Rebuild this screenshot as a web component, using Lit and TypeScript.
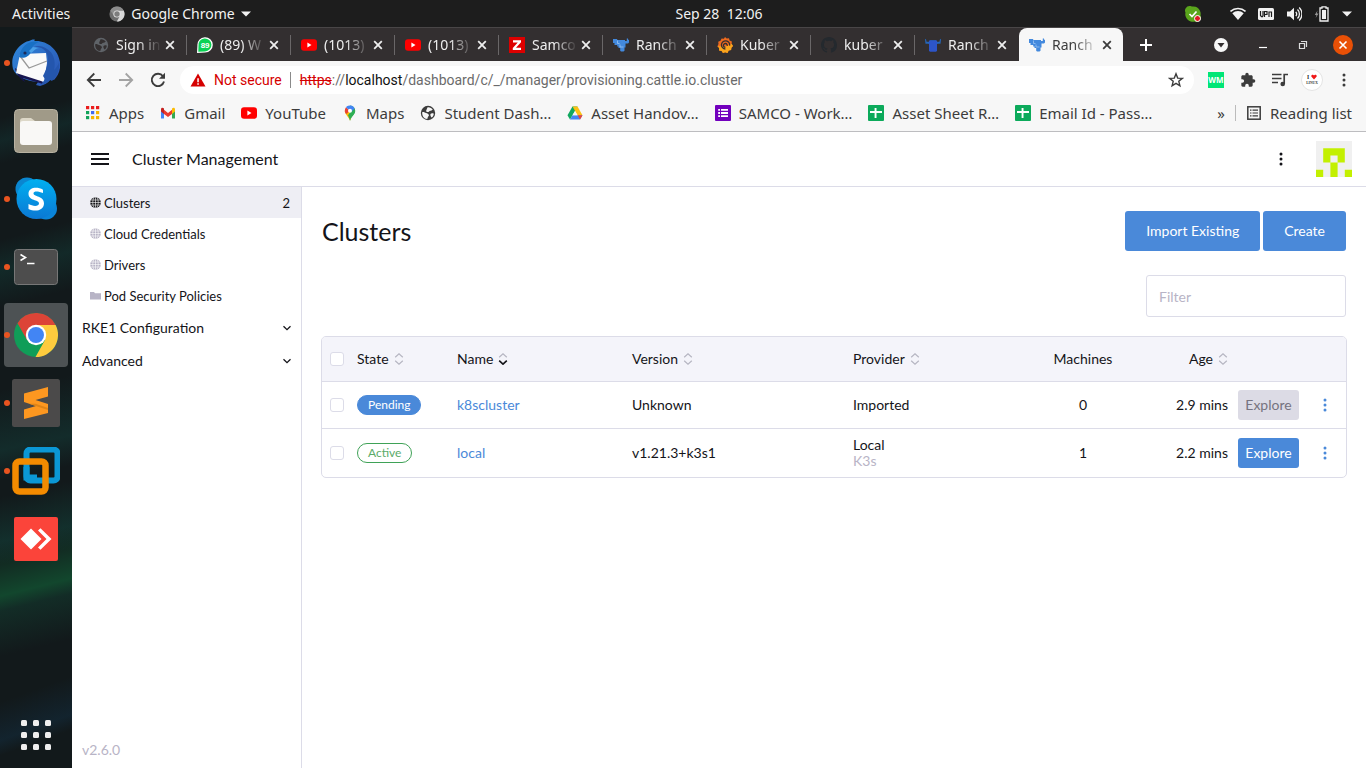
import { LitElement, html, css, svg, type TemplateResult } from "lit";
import { customElement, state } from "lit/decorators.js";
import { classMap } from "lit/directives/class-map.js";

const icon = (size: number, box: string, body: unknown) =>
  html`<svg width=${size} height=${size} viewBox=${box} aria-hidden="true">${body}</svg>`;

/* ---------- site icons ---------- */
const globe = (fill: string) => icon(16, "0 0 16 16", svg`
  <circle cx="8" cy="8" r="7.200" fill=${fill}></circle>
  <path d="M2.200 7.200C4 6.800 5 7.800 6 8.100c1.400.1 1.800 1 2.500 1.500.9.300.5 1.300-.2 1.800-.7.500-.6 1.700-1.100 2.700C4 13.600 1.900 11 2.200 7.200z" fill="var(--hole)"></path>
  <path d="M7.600 2.200c1.900-.3 4.200.7 5.200 2.500-1 .3-1.600 1.100-2.700 1.100-.9.300-1.300 1.500-2.400 1.300-1.200-.2-1.900-.9-1.400-1.900.5-.8.700-1.900 1.300-3z" fill="var(--hole)"></path>
  <path d="M10.500 8.900c.8-.9 2.400-.8 3.300-.2-.2 1.700-1 3-2.200 3.900-.5-1-1.700-2.300-1.100-3.700z" fill="var(--hole)"></path>`);
const whatsapp = icon(16, "0 0 16 16", svg`
  <path d="M0 16l.4-7.500A7.700 7.700 0 1 1 8 15.600z" fill="#fff"></path>
  <path d="M1.300 14.800l.2-6A6.500 6.500 0 1 1 8 14.400z" fill="#0bd254"></path>
  <text x="8.100" y="10.600" font-size="8" font-weight="700" text-anchor="middle" fill="#fff" font-family="Liberation Sans, sans-serif">89</text>`);
const youtube = icon(16, "0 0 16 16", svg`
  <rect x="0" y="2.300" width="16" height="11.400" rx="3" fill="#f00"></rect><path d="M6.400 5.600v4.800L10.500 8z" fill="#fff"></path>`);
const zerodha = icon(16, "0 0 16 16", svg`
  <rect width="16" height="16" fill="#d00"></rect><path d="M4 3.200h8v2L7 10.800h5v2.200H3.800v-2.100l5-5.500H4z" fill="#fff"></path>`);
const rancher = icon(16, "0 0 16 16", svg`
  <path d="M0 2h4.200v1H12v1h1.800V1.500H15v1.300h1v2.700l-1 1h-2.500v4h-1v3.200l-1 .8H8l-.8-.8V11H5.500V9.500H4.200V8H1.500V6H0z" fill="#4389dd"></path>
  <path d="M4.500 3.500v3h2M7 7.500V10h3.500" stroke="#9cc4f2" stroke-width=".8" fill="none"></path>`);
const cattle = icon(16, "0 0 16 16", svg`
  <path d="M0 2.500l.9-.7.7 3h3l.4-1.500h6l.4 1.500h3l.7-3 .9.700-.5 4.300h-3V7H3.500v-.2h-3z" fill="#2566b8"></path>
  <path d="M4 3.500h8v10l-.8 1.200H4.800L4 13.500z" fill="#2d55c8"></path>`);
const grafana = icon(16, "0 0 16 16", svg`
  <path d="M8 0l1.700 1.500 2.300-.3.600 2.200 2.300 1-.3 2.400L16 9l-1.600 1.700-.3 2.400-2.400.4L10.500 16l-2.300-.8-2.200.8-1.400-2-2.500-.5.1-2.500L.4 9.200l1.100-2.100L1.200 4.700l2.300-.9L4.600 1.600l2.300.1z" fill="#ee6a1e"></path>
  <path d="M.4 9.200L9 9.500l5.600-2.700L16 9l-1.600 1.700-.3 2.400-2.400.4L10.500 16l-2.300-.8-2.200.8-1.400-2-2.500-.5.1-2.500z" fill="#f9a51c"></path>
  <path d="M12.600 8.600A4.100 4.100 0 1 0 8.400 12M10.200 8.800a1.900 1.900 0 1 0-1.800 1.500" fill="none" stroke="#332e2f" stroke-width="1.300"></path>`);
const github = icon(16, "0 0 16 16", svg`
  <path d="M8 0C3.580 0 0 3.580 0 8c0 3.540 2.290 6.530 5.470 7.590.4.070.550-.17.550-.38 0-.19-.01-.82-.01-1.490-2.010.370-2.530-.49-2.690-.94-.09-.23-.48-.94-.82-1.130-.28-.15-.68-.52-.01-.53.630-.01 1.080.580 1.230.820.720 1.210 1.870.870 2.330.660.070-.52.280-.87.510-1.070-1.780-.2-3.640-.89-3.640-3.950 0-.87.310-1.590.820-2.150-.08-.2-.36-1.020.080-2.120 0 0 .670-.21 2.200.820A7.700 7.700 0 0 1 8 3.860c.680 0 1.360.09 2 .270 1.530-1.040 2.200-.82 2.200-.82.440 1.100.160 1.920.080 2.120.510.560.820 1.270.820 2.150 0 3.070-1.870 3.750-3.650 3.950.290.250.540.730.540 1.480 0 1.070-.01 1.930-.01 2.200 0 .210.150.460.550.380A8 8 0 0 0 16 8c0-4.420-3.580-8-8-8z" fill="#24292e"></path>`);
const apps = icon(16, "0 0 16 16", svg`
  ${["#ea1d1d", "#ea1d1d", "#ea1d1d", "#12a35a", "#4169f0", "#f5b400", "#12a35a", "#f5b400", "#f5b400"].map(
    (c, i) => svg`<rect x=${1 + (i % 3) * 5} y=${1 + Math.floor(i / 3) * 5} width="3.200" height="3.200" fill=${c}></rect>`)}`);
const gmail = icon(16, "0 0 16 16", svg`
  <path d="M1 4v9.500h3V8z" fill="#4285f4"></path><path d="M15 4v9.500h-3V8z" fill="#34a853"></path>
  <path d="M4 4.800L8 8l4-3.200V9l-4 3.100L4 9z" fill="#ea3a2e"></path>
  <path d="M1 4.200C1 2.700 2.700 2.200 4 3.500V9L1 6.600z" fill="#c5221f"></path><path d="M15 4.200c0-1.500-1.700-2-3-.7V9l3-2.400z" fill="#fbbc04"></path>`);
const maps = icon(16, "0 0 16 16", svg`
  <path d="M8 .5a5.200 5.200 0 0 1 5.200 5.200C13.200 9.500 9.500 11 8 15.800z" fill="#34a853"></path>
  <path d="M8 15.800C7 12 2.800 9.500 2.800 5.700L8 5.500l2 4z" fill="#fbbc04"></path>
  <path d="M8 15.800c.4-4.500 5.200-6.300 5.200-10.100L10 5 6 10.200c1 1.800 1.500 3.600 2 5.600z" fill="#2eaf54"></path>
  <path d="M2.800 5.700A5.200 5.200 0 0 1 4 2.200L8 5.700 4.300 9C3.400 8 2.800 7 2.800 5.700z" fill="#ea4335"></path>
  <path d="M4 2.200A5.200 5.200 0 0 1 12.700 3.500L9 7z" fill="#4285f4"></path>
  <circle cx="8" cy="5.700" r="2" fill="#fff"></circle>`);
const drive = icon(16, "0 0 16 16", svg`
  <path d="M5.500 1.500h5L8 6 3 14.500.5 10.200z" fill="#11a860"></path>
  <path d="M5.500 1.500h5l5 8.700h-5z" fill="#fbc116"></path>
  <path d="M5.500 10.200h10L13 14.500H3z" fill="#4285f4"></path><path d="M8 6l2.500 4.200h-5z" fill="#f7f7f7"></path>
  <path d="M10.700 10.200h4.800L13 14.500z" fill="#ea4335"></path>`);
const forms = icon(16, "0 0 16 16", svg`
  <rect width="16" height="16" rx="1" fill="#7200bd"></rect>
  <path d="M3.200 4h1.800v1.800H3.200zM3.200 7.100h1.800v1.800H3.200zM3.200 10.200h1.800V12H3.200zM6 4h7v1.800H6zM6 7.100h7v1.800H6zM6 10.200h7V12H6z" fill="#fff"></path>`);
const sheets = icon(16, "0 0 16 16", svg`
  <rect width="16" height="16" rx="1" fill="#0caa5b"></rect><path d="M6.600 3h1.900v3H14v1.900H8.500V13H6.600V7.900H2V6h4.600z" fill="#fff"></path>`);

/* ---------- browser glyphs ---------- */
const cross = icon(10, "0 0 10 10", svg`<path d="M1.200 1.200l7.600 7.600M8.800 1.200L1.200 8.800" stroke="currentColor" stroke-width="1.800"></path>`);
const back = icon(16, "0 0 16 16", svg`<path d="M15 8H2M8.300 1.500L1.800 8l6.500 6.500" fill="none" stroke="currentColor" stroke-width="1.800"></path>`);
const forward = icon(16, "0 0 16 16", svg`<path d="M1 8h13M7.700 1.500L14.200 8l-6.500 6.500" fill="none" stroke="currentColor" stroke-width="1.800"></path>`);
const reload = icon(16, "0 0 16 16", svg`<path d="M13 4.200A6.200 6.200 0 1 0 14 9.500" fill="none" stroke="currentColor" stroke-width="1.900"></path><path d="M15 .8v6H9z" fill="currentColor"></path>`);
const warning = icon(16, "0 0 16 16", svg`<path d="M8 1.500L15.500 14.500H.5z" fill="#d50000"></path><path d="M7.300 6.300h1.500v4H7.300zM7.300 11.300h1.500v1.500H7.300z" fill="#fff"></path>`);
const star = icon(16, "0 0 16 16", svg`<path d="M8 1.800l1.700 4.300 4.600.3-3.500 2.900 1.100 4.500L8 11.300l-3.900 2.500 1.100-4.500-3.500-2.900 4.600-.3z" fill="none" stroke="currentColor" stroke-width="1.400"></path>`);
const wm = icon(16, "0 0 16 16", svg`<rect width="16" height="16" fill="#00e676"></rect>
  <text x="8" y="11" font-size="8" font-weight="700" text-anchor="middle" fill="#fff" font-family="Open Sans, sans-serif">WM</text>`);
const puzzle = icon(16, "0 0 24 24", svg`<path d="M20.500 11H19V7c0-1.100-.9-2-2-2h-4V3.500a2.500 2.500 0 0 0-5 0V5H4c-1.100 0-2 .9-2 2v3.800h1.500a2.700 2.700 0 0 1 0 5.400H2V20c0 1.100.9 2 2 2h3.800v-1.500a2.700 2.700 0 0 1 5.400 0V22H17c1.100 0 2-.9 2-2v-4h1.500a2.500 2.500 0 0 0 0-5z" fill="currentColor"></path>`);
const music = icon(16, "0 0 16 16", svg`<path d="M0 2.500h9.500M0 6.500h9.500M0 10.500h6" stroke="currentColor" stroke-width="1.600"></path>
  <path d="M12.200 12V2.500H16" fill="none" stroke="currentColor" stroke-width="1.700"></path><circle cx="10.700" cy="12" r="2.300" fill="currentColor"></circle>`);
const profile = icon(22, "0 0 22 22", svg`<circle cx="11" cy="11" r="10.500" fill="#fff" stroke="#e4e4e4"></circle>
  <text x="6" y="10" font-size="5.500" font-weight="700" fill="#222" font-family="Liberation Serif, serif">I</text>
  <path d="M13 10.500L10.300 7.600a1.500 1.500 0 0 1 2.700-1.200 1.500 1.500 0 0 1 2.700 1.200z" fill="#f01818"></path>
  <text x="11" y="14.500" font-size="3.600" font-weight="700" text-anchor="middle" fill="#333" font-family="Liberation Serif, serif">LINUX</text>`);
const kebab = icon(16, "0 0 16 16", svg`<circle cx="8" cy="3" r="1.500"></circle><circle cx="8" cy="8" r="1.500"></circle><circle cx="8" cy="13" r="1.500"></circle>`);
const reading = icon(16, "0 0 16 16", svg`<rect x="1.800" y="1.800" width="12.400" height="12.400" fill="none" stroke="currentColor" stroke-width="1.500"></rect>
  <path d="M4 5.200h1.500M4 8h1.500M4 10.800h1.500M6.500 5.200H12M6.500 8H12M6.500 10.800H12" stroke="currentColor" stroke-width="1.200"></path>`);

/* ---------- desktop icons ---------- */
const chromeGrey = icon(16, "0 0 16 16", svg`<circle cx="8" cy="8" r="7.600" fill="#6e6e6e"></circle>
  <path d="M8 4.500h6.700A7.600 7.600 0 0 1 7.800 15.600L11 9.800z" fill="#d8d8d8"></path><path d="M1.300 4.500A7.600 7.600 0 0 1 14.700 4.500H8L4.900 9.700z" fill="#8d8d8d"></path>
  <circle cx="8" cy="8" r="3.600" fill="#e4e4e4"></circle><circle cx="8" cy="8" r="2.700" fill="#7d7d7d"></circle>`);
const caret = icon(10, "0 0 10 10", svg`<path d="M0 2.500h10L5 7.500z" fill="currentColor"></path>`);
const skypeTray = icon(16, "0 0 16 16", svg`<path d="M4.500 0a4.500 4.500 0 0 0-4 6.500 7.500 7.500 0 0 0 9 9A4.500 4.500 0 0 0 15.500 9.500a7.500 7.500 0 0 0-8.500-9A4.500 4.500 0 0 0 4.500 0z" fill="#5aa51c"></path>
  <path d="M4.500 8l2.500 2.500 4.500-5" fill="none" stroke="#fff" stroke-width="1.700"></path><circle cx="12.500" cy="12.500" r="3" fill="#e01b24" stroke="#fff"></circle>`);
const wifi = icon(16, "0 0 16 16", svg`<path d="M.5 5.500a11 11 0 0 1 15 0" fill="none" stroke="#f2f2f2" stroke-width="1.600"></path><path d="M2.300 7.300a8.500 8.500 0 0 1 11.400 0L8 14z" fill="#f2f2f2"></path>`);
const vpn = icon(16, "0 0 16 16", svg`<rect y="2" width="16" height="12" rx="1.500" fill="#f2f2f2"></rect>
  <path d="M2.500 5v4.500l1 1.200h1L5 9.500V5M6.500 11V5.500H9v3H6.500M11 11V6h2.500v5" fill="none" stroke="#1d1d1d" stroke-width="1.200"></path>`);
const volume = icon(16, "0 0 16 16", svg`<path d="M1 5.500h3L8 1.800v12.400L4 10.500H1z" fill="#f2f2f2"></path>
  <path d="M9.800 5.800a3.500 3.500 0 0 1 0 4.400M11.500 3.500a6.200 6.200 0 0 1 0 9M13.200 1.500a9 9 0 0 1 0 13" fill="none" stroke="#f2f2f2" stroke-width="1.300"></path>`);
const battery = icon(16, "0 0 16 16", svg`<path d="M3.500 4.500L.8 9h1.700L1.700 12 4.500 7.500H2.800z" fill="#999"></path>
  <path d="M8 2V.8h4V2h2v13H6V2z" fill="none" stroke="#f2f2f2" stroke-width="1.300"></path><rect x="8" y="4" width="4" height="9" fill="#f2f2f2"></rect>`);

const thunderbird = icon(48, "0 0 48 48", svg`
  <defs><linearGradient id="tb" x1="0" y1="0" x2="1" y2="1"><stop offset="0" stop-color="#2e8ade"></stop><stop offset="1" stop-color="#2c4fae"></stop></linearGradient></defs>
  <path d="M1 18C4 9 11 3 17 2c2-1 5-2 6-1l-1 1c13-1 24 8 26 21 1 8-2 14-6 18l-3-1c-3 4-7 6-11 7l-4-1 2-3C14 42 4 38 1 30c-1-4-1-9 0-12z" fill="url(#tb)"></path>
  <path d="M3 29c1 6 5 11 10 14l-2-4 20 6-2-8L6 31z" fill="#171550"></path>
  <path d="M8 15l26-1 1 10-3 19L4 34z" fill="#fafafa"></path><path d="M8 17l9 12 18-7" fill="none" stroke="#999" stroke-width="1.300"></path>
  <path d="M7 18C9 7 17 1 27 3c-5 2-8 5-8 10-2 5-8 7-12 5z" fill="#1870c4"></path>
  <path d="M22 8c9-1 15 5 14 14-1 7-3 11-5 15l2 3-4 6c4-1 7-3 9-5l2 1c5-5 8-12 7-19-1 4-3 6-5 8 2-8 0-17-7-21-4-3-9-4-13-2z" fill="#2456ad"></path>
  <path d="M17 12l4-4 6 1c-3 0-5 3-8 5z" fill="#4aa0e8"></path><circle cx="13" cy="14" r="1.600" fill="#1b2b5a"></circle>`);
const files = icon(48, "0 0 48 48", svg`<rect x="2.500" y="2.500" width="43" height="43" rx="4" fill="#a09a88" stroke="#b8b2a2"></rect>
  <path d="M8 14a3 3 0 0 1 3-3h8l4 3h14v6H8z" fill="#ddd8c8"></path><rect x="8" y="14" width="32" height="24" rx="3" fill="#f9f8f6"></rect>`);
const skype = icon(48, "0 0 48 48", svg`
  <defs><linearGradient id="sk" x1="0" y1="0" x2="0" y2="1"><stop offset="0" stop-color="#00aff0"></stop><stop offset="1" stop-color="#0b78d4"></stop></linearGradient></defs>
  <circle cx="15" cy="14" r="11.500" fill="#0a86d0"></circle><circle cx="34" cy="33.500" r="11" fill="#0a84d8"></circle>
  <circle cx="24.500" cy="24" r="20" fill="url(#sk)"></circle>
  <path d="M31 14.800c-6-3.500-14.500-2.300-14.500 4 0 7.500 10.500 5.500 10.500 9.500 0 3.500-6 3.300-10.500.8V34c7 3.200 15.500 1.500 15.500-5.800 0-7.700-10.500-6-10.500-9.900 0-2.700 5-2.300 9.500-.3z" fill="#fff"></path>`);
const terminal = icon(48, "0 0 48 48", svg`<rect x="2.500" y="6.500" width="43" height="35" rx="3" fill="#4d4d4d" stroke="#777"></rect>
  <path d="M8.500 11.500l5 3-5 3M15 20.500h7.500" fill="none" stroke="#fff" stroke-width="1.600"></path>`);
const chrome = icon(48, "0 0 48 48", svg`<circle cx="24" cy="24" r="22" fill="#109d58"></circle>
  <path d="M24 14h19.600A22 22 0 0 1 23.500 46L33 29z" fill="#fecb3e"></path>
  <path d="M5.500 12.200A22 22 0 0 1 43.600 14H24l-9 15z" fill="#dc4437"></path>
  <circle cx="24" cy="24" r="10.200" fill="#fff"></circle><circle cx="24" cy="24" r="8" fill="#4285f4"></circle>`);
const sublime = icon(48, "0 0 48 48", svg`<rect width="48" height="48" rx="2.500" fill="#4b4a4a"></rect>
  <path d="M36 8v9.500L23.500 21 36 25v9L12 40V30.500L24 27l-12-4v-8.500z" fill="#fd9720"></path><path d="M17 24.700L36 31v-2l-12.500-4.300z" fill="#e08416"></path>`);
const vmware = icon(48, "0 0 48 48", svg`<rect x="14.500" y="2.500" width="31" height="31" rx="4" fill="none" stroke="#0b97d5" stroke-width="6"></rect>
  <rect x="3.500" y="14.500" width="30" height="30" rx="4" fill="none" stroke="#f38b00" stroke-width="6.500"></rect>
  <path d="M14.500 20v10.500H25" fill="none" stroke="#0b97d5" stroke-width="6"></path>`);
const anydesk = icon(48, "0 0 48 48", svg`<rect x="2" y="2" width="44" height="44" rx="2" fill="#fb443a"></rect>
  <path d="M8.500 24L19 13.500 29.500 24 19 34.500z" fill="#fff"></path><path d="M26 15.500l8.500 8.500-8.500 8.500 2.500 2.300L39.500 24 28.500 13.200z" fill="#fff"></path>`);
const launcher = icon(32, "0 0 32 32", svg`${[0, 1, 2, 3, 4, 5, 6, 7, 8].map(
  (i) => svg`<rect x=${1 + (i % 3) * 12} y=${1 + Math.floor(i / 3) * 12} width="6" height="6" rx="1.500" fill="#eee"></rect>`)}`);

/* ---------- dashboard icons ---------- */
const menuLines = icon(18, "0 0 18 18", svg`<path d="M0 4h18M0 9h18M0 14h18" stroke="#141419" stroke-width="2"></path>`);
const world = icon(12, "0 0 12 12", svg`<circle cx="6.500" cy="5.500" r="5.300" fill="currentColor"></circle>
  <path d="M6.500 .2v10.600M1 5.500h11M1.800 3h9.400M1.800 8h9.400M5 .4c-1.700 3-1.700 7.400 0 10.200M8 .4c1.700 3 1.700 7.400 0 10.200" fill="none" stroke="var(--line)" stroke-width=".6"></path>`);
const folder = icon(12, "0 0 12 12", svg`<path d="M1 2h4l1 1.200h6V9.500H1z" fill="currentColor"></path>`);
const chevron = icon(10, "0 0 10 10", svg`<path d="M1.500 3.300L5 6.700l3.500-3.400" fill="none" stroke="#141419" stroke-width="1.300"></path>`);
const sorter = (down: boolean) => html`<svg width="10" height="12" viewBox="0 0 10 12" aria-hidden="true">
  <path d="M1.200 4.300L5 .8l3.800 3.500" fill="none" stroke="#b6b6c2" stroke-width="1.200"></path>
  <path d="M1.200 7.700L5 11.200l3.800-3.500" fill="none" stroke=${down ? "#141419" : "#b6b6c2"} stroke-width=${down ? 1.6 : 1.2}></path></svg>`;
const identicon = icon(36, "0 0 5 5", svg`<rect width="5" height="5" fill="#f0f0f0"></rect>
  <path d="M1 1h3v2H3V2H2v1H1zM2 3h1v2H2zM0 4h1v1H0zM4 4h1v1H4z" fill="#c3f000"></path>`);

interface Tab { label: string; icon: TemplateResult }
interface Cluster { state: string; name: string; version: string; provider: string; distro?: string; machines: number; age: string; ready: boolean }

const TABS: Tab[] = [
  { label: "Sign in", icon: globe("#5f6368") },
  { label: "(89) W", icon: whatsapp },
  { label: "(1013)", icon: youtube },
  { label: "(1013)", icon: youtube },
  { label: "Samco", icon: zerodha },
  { label: "Ranch", icon: rancher },
  { label: "Kuber", icon: grafana },
  { label: "kuber", icon: github },
  { label: "Ranch", icon: cattle },
  { label: "Ranch", icon: rancher },
];
const BOOKMARKS: Tab[] = [
  { label: "Apps", icon: apps },
  { label: "Gmail", icon: gmail },
  { label: "YouTube", icon: youtube },
  { label: "Maps", icon: maps },
  { label: "Student Dash…", icon: globe("#3c3c3c") },
  { label: "Asset Handov…", icon: drive },
  { label: "SAMCO - Work…", icon: forms },
  { label: "Asset Sheet R…", icon: sheets },
  { label: "Email Id - Pass…", icon: sheets },
];
const DOCK = [
  { name: "Thunderbird", icon: thunderbird, running: true },
  { name: "Files", icon: files, running: false },
  { name: "Skype", icon: skype, running: true },
  { name: "Terminal", icon: terminal, running: true },
  { name: "Google Chrome", icon: chrome, running: true, focused: true },
  { name: "Sublime Text", icon: sublime, running: true },
  { name: "VMware", icon: vmware, running: true },
  { name: "AnyDesk", icon: anydesk, running: false },
];
const CLUSTERS: Cluster[] = [
  { state: "Pending", name: "k8scluster", version: "Unknown", provider: "Imported", machines: 0, age: "2.9 mins", ready: false },
  { state: "Active", name: "local", version: "v1.21.3+k3s1", provider: "Local", distro: "K3s", machines: 1, age: "2.2 mins", ready: true },
];

const base = css`
  * { box-sizing: border-box; }
  button { font: inherit; color: inherit; background: none; border: 0; padding: 0; cursor: pointer; }
  a { color: inherit; text-decoration: none; }
  svg { display: block; flex: none; }
`;

@customElement("cluster-dashboard")
class ClusterDashboard extends LitElement {
  @state() private filter = "";

  static styles = [base, css`
    :host {
      --text: #141419; --muted: #b8b4c6; --edge: #dcdce8; --blue: #4a89d9;
      display: grid; grid-template: auto 1fr / 230px 1fr;
      font: 14px/18px Lato, sans-serif; color: var(--text); background: #fff;
    }
    .header { grid-column: 1 / -1; display: flex; align-items: center; height: 55px; padding: 0 14px 0 19px; border-bottom: 1px solid var(--edge); }
    .product { margin: 0 auto 0 23px; font-size: 16px; font-weight: 400; }
    .more { margin-right: 27px; fill: #141419; }
    .side { display: flex; flex-direction: column; border-right: 1px solid var(--edge); }
    .types { list-style: none; margin: 0; padding: 0; }
    .type { display: flex; align-items: center; gap: 3px; height: 31px; padding: 0 11px 0 17px; font-size: 13px; color: var(--text); --line: #fff; }
    .type svg { color: var(--muted); }
    .type.current { background: #eeeef4; }
    .type.current svg { color: #141419; }
    .count { margin-left: auto; }
    .group { display: flex; justify-content: space-between; align-items: center; height: 33px; padding: 0 9px 0 10px; }
    .release { margin-top: auto; padding: 9px 10px; color: var(--muted); }
    .main { padding: 24px 20px; min-width: 0; }
    .heading { display: flex; align-items: center; gap: 3px; }
    h1 { margin: 0 auto 0 0; font-size: 25px; line-height: 30px; font-weight: 400; }
    .primary { height: 40px; padding: 0 21px; border-radius: 3px; background: var(--blue); color: #fff; }
    .search { display: flex; justify-content: flex-end; margin: 24px 0 19px; }
    .search input { width: 200px; height: 42px; padding: 0 12px; border: 1px solid var(--edge); border-radius: 3px; font: inherit; color: inherit; background: #fff; }
    .search input::placeholder { color: var(--muted); opacity: 1; }
    .frame { margin: 0 -1px; border: 1px solid var(--edge); border-radius: 5px; overflow: hidden; }
    table { width: 100%; table-layout: fixed; border-collapse: collapse; }
    .c-check { width: 30px; } .c-state { width: 100px; } .c-name { width: 175px; } .c-version { width: 221px; }
    .c-machines { width: 96px; } .c-age { width: 102px; } .c-explore { width: 71px; } .c-menu { width: 42px; }
    th { height: 44px; padding: 0 5px; font-weight: 400; text-align: left; background: #f4f4fa; }
    td { padding: 8px 5px; border-top: 1px solid var(--edge); line-height: 16px; }
    .center { text-align: center; }
    .right { text-align: right; }
    .pick { padding: 0 8px; }
    .pick input { appearance: none; display: block; width: 14px; height: 14px; margin: 0; border: 1px solid var(--edge); border-radius: 3px; background: #fff; }
    .sort { display: inline-flex; align-items: center; gap: 5px; }
    .badge { display: inline-block; padding: 0 10px; border: 1px solid #3fa257; border-radius: 10px; font-size: 12px; line-height: 18px; color: #5bab69; }
    .badge.pending { background: var(--blue); border-color: var(--blue); color: #fff; }
    .link { color: var(--blue); }
    .distro { display: block; color: var(--muted); }
    .explore { display: block; width: 61px; height: 30px; border-radius: 3px; background: var(--blue); color: #fff; }
    .explore:disabled { background: #dcdbe5; color: #76737f; cursor: default; }
    .row-menu { display: block; margin: 0 auto; fill: var(--blue); }
  `];

  private sortHead(label: string, down = false) {
    return html`<button class="sort">${label}${sorter(down)}</button>`;
  }

  private row(c: Cluster) {
    return html`<tr>
      <td class="pick"><input type="checkbox" aria-label="Select ${c.name}"></td>
      <td><span class=${classMap({ badge: true, pending: !c.ready })}>${c.state}</span></td>
      <td><a class="link" href="#">${c.name}</a></td>
      <td>${c.version}</td>
      <td>${c.provider}${c.distro ? html`<span class="distro">${c.distro}</span>` : ""}</td>
      <td class="center">${c.machines}</td>
      <td class="right">${c.age}</td>
      <td><button class="explore" ?disabled=${!c.ready}>Explore</button></td>
      <td><button class="row-menu" aria-label="Actions for ${c.name}">${kebab}</button></td>
    </tr>`;
  }

  render() {
    const types = ["Clusters", "Cloud Credentials", "Drivers", "Pod Security Policies"];
    return html`
      <header class="header">
        <button aria-label="Menu">${menuLines}</button>
        <h2 class="product">Cluster Management</h2>
        <button class="more" aria-label="Page actions">${kebab}</button>
        <button aria-label="User">${identicon}</button>
      </header>
      <nav class="side">
        <ul class="types">
          ${types.map((t, i) => html`<li><a href="#" class=${classMap({ type: true, current: i === 0 })}>
            ${i === 3 ? folder : world}<span>${t}</span>${i === 0 ? html`<span class="count">2</span>` : ""}</a></li>`)}
        </ul>
        <button class="group">RKE1 Configuration${chevron}</button>
        <button class="group">Advanced${chevron}</button>
        <div class="release">v2.6.0</div>
      </nav>
      <main class="main">
        <div class="heading">
          <h1>Clusters</h1>
          <button class="primary">Import Existing</button>
          <button class="primary">Create</button>
        </div>
        <div class="search">
          <input type="search" aria-label="Filter" placeholder="Filter" .value=${this.filter}
            @input=${(e: Event) => (this.filter = (e.target as HTMLInputElement).value)}>
        </div>
        <div class="frame"><table>
          <colgroup><col class="c-check"><col class="c-state"><col class="c-name"><col class="c-version"><col>
            <col class="c-machines"><col class="c-age"><col class="c-explore"><col class="c-menu"></colgroup>
          <thead><tr>
            <th class="pick"><input type="checkbox" aria-label="Select all"></th>
            <th>${this.sortHead("State")}</th>
            <th>${this.sortHead("Name", true)}</th>
            <th>${this.sortHead("Version")}</th>
            <th>${this.sortHead("Provider")}</th>
            <th class="center">Machines</th>
            <th class="right">${this.sortHead("Age")}</th>
            <th></th><th></th>
          </tr></thead>
          <tbody>${CLUSTERS.filter((c) => c.name.includes(this.filter)).map((c) => this.row(c))}</tbody>
        </table></div>
      </main>`;
  }
}

@customElement("app-root")
class AppRoot extends LitElement {
  static styles = [base, css`
    :host { display: flex; flex-direction: column; min-height: 100vh; font: 14px/20px "Noto Sans", sans-serif; color: #3c3c3c; background: #1d1d1d; }
    .topbar { display: grid; grid-template-columns: 1fr auto 1fr; align-items: center; height: 27px; padding-left: 72px; color: #f2f2f2; }
    .topleft { display: flex; align-items: center; margin-left: -60px; }
    .appmenu { display: flex; align-items: center; gap: 6px; margin-left: 39px; }
    .clock { white-space: pre; }
    .tray { display: flex; align-items: center; justify-content: flex-end; gap: 12px; padding-right: 14px; }
    .tray .first { margin-right: 17px; }
    .desktop { display: flex; flex: 1; }
    .dock {
      display: flex; flex-direction: column; align-items: center; gap: 4px; width: 72px; padding: 4px 4px 17px;
      background:
        linear-gradient(165deg, transparent 12%, rgba(20, 90, 85, .2) 15%, transparent 18%),
        linear-gradient(165deg, transparent 28%, rgba(20, 90, 80, .25) 32%, transparent 37%),
        linear-gradient(168deg, transparent 48%, rgba(22, 100, 90, .25) 56%, transparent 60%),
        linear-gradient(167deg, transparent 62%, rgba(20, 100, 85, .3) 68%, transparent 71%),
        linear-gradient(166deg, transparent 68%, rgba(18, 95, 55, .65) 75%, rgba(20, 80, 60, .35) 77%, transparent 83%),
        linear-gradient(160deg, transparent 88%, rgba(20, 60, 90, .3) 93%, transparent 95%),
        #12191b;
    }
    .launch { display: flex; align-items: center; justify-content: center; width: 64px; height: 64px; border-radius: 4px; position: relative; }
    .launch.focused { background: rgba(255, 255, 255, .25); }
    .launch.running::before { content: ""; position: absolute; left: 0; top: 29px; width: 6px; height: 6px; border-radius: 3px; background: #e95420; }
    .grid { margin-top: auto; }
    .browser { flex: 1; min-width: 0; display: flex; flex-direction: column; background: #f7f7f7; }
    .strip { display: flex; align-items: center; height: 34px; padding: 0 13px 0 11px; background: #332f30; border-top: 1px solid #494647; color: #eee; }
    .tab { display: flex; align-items: center; width: 104px; height: 20px; padding: 0 11px 0 10px; border-right: 1px solid #6a6768; --hole: #332f30; }
    .tab .name { flex: 1; margin: 0 1px 0 7px; white-space: nowrap; mask-image: linear-gradient(90deg, #000 45%, transparent 95%); }
    .tab.beside { border-color: transparent; }
    .tab.active { height: 34px; margin-bottom: -1px; padding-bottom: 1px; border: 0; border-radius: 8px 8px 0 0; background: #f7f7f7; color: #3c3c3c; }
    .new { margin: 0 auto 0 17px; }
    .controls { display: flex; align-items: center; gap: 30px; }
    .close { margin-left: -5px; }
    .toolbar { display: flex; align-items: center; gap: 16px; height: 38px; padding: 0 14px; }
    .toolbar .dim { color: #a3a3a3; }
    .toolbar .person { margin: 0 -3px; }
    .kebab { fill: currentColor; }
    .address { display: flex; align-items: center; flex: 1; height: 28px; margin: 0 -2px 0 -2px; padding: 0 10px; border-radius: 14px; background: #fff; font-family: Roboto, sans-serif; }
    .unsafe { display: flex; align-items: center; gap: 8px; padding-right: 8px; color: #d50000; }
    .url { border-left: 1px solid #8a8a8a; line-height: 16px; padding-left: 9px; margin-right: auto; color: #6b6b6b; }
    .url s { color: #d50000; }
    .url b { font-weight: 400; color: #111; }
    .bookmarks { display: flex; align-items: center; gap: 16px; height: 33px; padding: 0 14px 5px 13px; border-bottom: 1px solid #bdbdc0; white-space: nowrap; font-size: 15px; }
    .bookmark { display: flex; align-items: center; gap: 8px; --hole: #f7f7f7; }
    .overflow { margin-left: auto; }
    .later { display: flex; align-items: center; gap: 8px; margin-left: -6px; padding-left: 10px; border-left: 1px solid #bbb; line-height: 16px; }
    cluster-dashboard { flex: 1; }
  `];

  render() {
    return html`
      <header class="topbar">
        <div class="topleft"><button>Activities</button><button class="appmenu">${chromeGrey}Google Chrome${caret}</button></div>
        <button class="clock">Sep 28  12:06</button>
        <div class="tray"><span class="first">${skypeTray}</span>${wifi}${vpn}${volume}${battery}${caret}</div>
      </header>
      <div class="desktop">
        <nav class="dock" aria-label="Dock">
          ${DOCK.map((d) => html`<button aria-label=${d.name} class=${classMap({ launch: true, running: d.running, focused: !!d.focused })}>${d.icon}</button>`)}
          <button class="grid" aria-label="Show applications">${launcher}</button>
        </nav>
        <section class="browser">
          <div class="strip">
            ${TABS.map((t, i) => html`<div class=${classMap({ tab: true, active: i === TABS.length - 1, beside: i === TABS.length - 2 })}>
              ${t.icon}<span class="name">${t.label}</span><button aria-label="Close tab">${cross}</button></div>`)}
            <button class="new" aria-label="New tab">${icon(12, "0 0 12 12", svg`<path d="M6 0v12M0 6h12" stroke="#fff" stroke-width="2"></path>`)}</button>
            <div class="controls">
              <button aria-label="Search tabs">${icon(14, "0 0 14 14", svg`<circle cx="7" cy="7" r="7" fill="#f7f7f7"></circle><path d="M3.500 5h7L7 9.500z" fill="#332f30"></path>`)}</button>
              <button aria-label="Minimise">${icon(10, "0 0 10 10", svg`<path d="M1 7.500h8" stroke="#fff" stroke-width="1.200"></path>`)}</button>
              <button aria-label="Restore">${icon(10, "0 0 10 10", svg`<path d="M1.500 3.500h5v5h-5zM3 1.500h5.500V7" fill="none" stroke="#ddd" stroke-width="1.200"></path>`)}</button>
              <button class="close" aria-label="Close">${icon(20, "0 0 20 20", svg`<circle cx="10" cy="10" r="10" fill="#e95006"></circle><path d="M6.500 6.500l7 7M13.500 6.500l-7 7" stroke="#fff" stroke-width="1.600"></path>`)}</button>
            </div>
          </div>
          <div class="toolbar">
            <button aria-label="Back">${back}</button>
            <button class="dim" aria-label="Forward">${forward}</button>
            <button aria-label="Reload">${reload}</button>
            <div class="address">
              <button class="unsafe">${warning}Not secure</button>
              <span class="url"><s>https</s>://<b>localhost</b>/dashboard/c/_/manager/provisioning.cattle.io.cluster</span>
              <button aria-label="Bookmark this page">${star}</button>
            </div>
            <button aria-label="WM extension">${wm}</button>
            <button aria-label="Extensions">${puzzle}</button>
            <button aria-label="Media">${music}</button>
            <button class="person" aria-label="Profile">${profile}</button>
            <button class="kebab" aria-label="Browser menu">${kebab}</button>
          </div>
          <nav class="bookmarks" aria-label="Bookmarks">
            ${BOOKMARKS.map((b) => html`<a class="bookmark" href="#">${b.icon}${b.label}</a>`)}
            <button class="overflow" aria-label="More bookmarks">»</button>
            <button class="later">${reading}Reading list</button>
          </nav>
          <cluster-dashboard></cluster-dashboard>
        </section>
      </div>`;
  }
}
